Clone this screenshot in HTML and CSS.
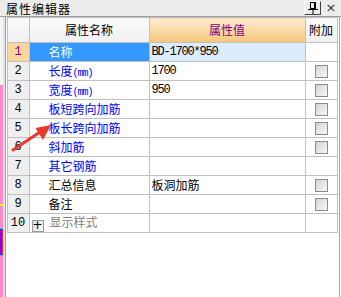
FILE: index.html
```html
<!DOCTYPE html>
<html lang="zh">
<head>
  <meta charset="UTF-8" />
  <title>属性编辑器</title>
  <link rel="stylesheet" href="styles.css">
</head>
<body>
  <div class="window">
    <div class="titlebar">
      <span class="title">属性编辑器</span>
      <div class="title-buttons">
        <span class="pin-btn">
          <svg width="12" height="12" viewBox="0 0 12 12">
            <rect x="3.5" y="0.5" width="5" height="6" fill="none" stroke="#000" />
            <line x1="7.5" y1="1" x2="7.5" y2="7" stroke="#000" />
            <line x1="1" y1="7.5" x2="11" y2="7.5" stroke="#000" />
            <line x1="6" y1="8" x2="6" y2="12" stroke="#000" />
          </svg>
        </span>
        <span class="close-btn">×</span>
      </div>
    </div>

    <div class="content">
      <div class="canvas-strip">
        <div class="strip-blank"></div>
        <div class="strip-pink tall"></div>
        <div class="strip-yellow"></div>
        <div class="strip-pink mid"></div>
        <div class="strip-cyan"></div>
        <div class="strip-purple"></div>
        <div class="strip-cyan"></div>
        <div class="strip-pink fill"></div>
      </div>
      <div class="edge"></div>

      <div class="panel">
        <table class="props">
          <colgroup>
            <col class="col-num">
            <col class="col-name">
            <col class="col-value">
            <col class="col-extra">
          </colgroup>
          <tr class="head">
            <th class="num"></th>
            <th>属性名称</th>
            <th class="head-value">属性值</th>
            <th>附加</th>
          </tr>
          <tr class="selected">
            <td class="num">1</td>
            <td class="name">名称</td>
            <td class="value mono">BD-1700*950</td>
            <td class="extra"></td>
          </tr>
          <tr>
            <td class="num">2</td>
            <td class="name link">长度<span class="unit">(mm)</span></td>
            <td class="value mono">1700</td>
            <td class="extra"><span class="check"></span></td>
          </tr>
          <tr>
            <td class="num">3</td>
            <td class="name link">宽度<span class="unit">(mm)</span></td>
            <td class="value mono">950</td>
            <td class="extra"><span class="check"></span></td>
          </tr>
          <tr>
            <td class="num">4</td>
            <td class="name link">板短跨向加筋</td>
            <td class="value"></td>
            <td class="extra"><span class="check"></span></td>
          </tr>
          <tr>
            <td class="num">5</td>
            <td class="name link">板长跨向加筋</td>
            <td class="value"></td>
            <td class="extra"><span class="check"></span></td>
          </tr>
          <tr>
            <td class="num">6</td>
            <td class="name link">斜加筋</td>
            <td class="value"></td>
            <td class="extra"><span class="check"></span></td>
          </tr>
          <tr>
            <td class="num">7</td>
            <td class="name link">其它钢筋</td>
            <td class="value"></td>
            <td class="extra"></td>
          </tr>
          <tr>
            <td class="num">8</td>
            <td class="name">汇总信息</td>
            <td class="value">板洞加筋</td>
            <td class="extra"><span class="check"></span></td>
          </tr>
          <tr>
            <td class="num">9</td>
            <td class="name">备注</td>
            <td class="value"></td>
            <td class="extra"><span class="check"></span></td>
          </tr>
          <tr>
            <td class="num">10</td>
            <td class="name group"><span class="expander">+</span>显示样式</td>
            <td class="value"></td>
            <td class="extra"></td>
          </tr>
        </table>
      </div>
      <div class="edge-right"></div>
    </div>

    <svg class="arrow" width="60" height="60" viewBox="0 0 60 60">
      <line x1="13" y1="50" x2="40" y2="32" stroke="#e8392b" stroke-width="3" stroke-linecap="round" />
      <polygon points="51,25 35.5,28 43,40" fill="#e8392b" />
    </svg>
  </div>
</body>
</html>
```

FILE: styles.css
```css
body {
  margin: 0;
  background: #ffffff;
  font-family: "Noto Sans CJK SC", "Liberation Sans", sans-serif;
  font-size: 12px;
  color: #000;
}

.window {
  position: relative;
  width: 341px;
  height: 297px;
  overflow: hidden;
}

/* title bar */
.titlebar {
  height: 16px;
  background: #ececec;
  border-bottom: 1px solid #a0a0a0;
  display: flex;
  align-items: flex-start;
  justify-content: space-between;
}

.title {
  display: block;
  padding: 2px 0 0 6px;
  font-size: 12px;
  line-height: 14px;
  letter-spacing: 1px;
}

.title-buttons {
  display: flex;
  align-items: center;
  height: 16px;
}

.pin-btn {
  display: flex;
  align-items: center;
  justify-content: center;
  width: 17px;
  height: 14px;
  box-sizing: border-box;
  border-right: 1px solid #404040;
  border-bottom: 1px solid #404040;
  border-top: 1px solid #fff;
  border-left: 1px solid #fff;
}

.close-btn {
  width: 20px;
  text-align: center;
  font-family: "DejaVu Sans", sans-serif;
  font-size: 13px;
  line-height: 16px;
  color: #333;
}

/* main area */
.content {
  display: flex;
  height: 280px;
}

.canvas-strip {
  width: 4px;
  display: flex;
  flex-direction: column;
}

.strip-blank { height: 68px; background: #f4f4f4; }
.strip-pink { background: #ff88c8; }
.strip-pink.tall { height: 119px; }
.strip-pink.mid { height: 22px; }
.strip-pink.fill { flex: 1; }
.strip-yellow { height: 2px; background: #ffff00; }
.strip-cyan { height: 1px; background: #00e0e0; }
.strip-purple {
  height: 26px;
  background: #8800ff;
  border-right: 1px solid #ff2020;
  box-sizing: border-box;
}

.edge {
  width: 2px;
  background: #e2e2e2;
  border-right: 1px solid #a0a0a0;
}

.panel {
  flex: 1;
  padding-left: 1px;
  background: #fff;
}

.edge-right {
  width: 2px;
  margin-left: 1px;
  background: #a8a8a8;
  margin-right: 1px;
}

/* property table */
.props {
  border-collapse: collapse;
  table-layout: fixed;
  width: 330px;
}

.col-num { width: 22px; }
.col-name { width: 120px; }
.col-value { width: 156px; }
.col-extra { width: 32px; }

.props th,
.props td {
  border: 1px solid #c0c0c0;
  padding: 0;
  white-space: nowrap;
  overflow: hidden;
}

.props tr {
  height: 19px;
}

.props tr.head {
  height: 25px;
}

.props th {
  font-weight: normal;
  font-size: 12px;
  line-height: 16px;
  background: linear-gradient(#fafafa, #f0f0f0);
  text-align: center;
}

.props th.head-value {
  background: linear-gradient(#fdecd2, #f6c779);
  color: #800080;
}

.props td {
  height: 17px;
  line-height: 16px;
}

.props td.num {
  background: #efefef;
  text-align: center;
  font-family: "Liberation Mono", monospace;
  font-size: 12px;
}

.props td.name {
  padding-left: 19px;
}

.props td.value {
  padding-left: 2px;
}

.mono {
  font-family: "Liberation Mono", monospace;
  letter-spacing: -1.2px;
}

.link {
  color: #0000ff;
}

.unit {
  font-family: "Liberation Mono", monospace;
  font-size: 10px;
  line-height: 10px;
  letter-spacing: -1px;
}

.selected td.num {
  background: #fcd59c;
  color: #800080;
}

.selected td.name {
  background: #3399ff;
  color: #fff;
}

.selected td.value {
  background: #ddecfd;
}

.props td.extra {
  text-align: center;
}

.check {
  display: inline-block;
  width: 13px;
  height: 13px;
  box-sizing: border-box;
  vertical-align: -2px;
  border: 1px solid #8c8c8c;
  background: linear-gradient(135deg, #d4d4d4, #f8f8f8);
}

.props td.group {
  padding-left: 2px;
  color: #808080;
}

.expander {
  display: inline-block;
  width: 12px;
  height: 12px;
  box-sizing: border-box;
  margin-right: 6px;
  border: 1px solid #9a9a9a;
  background: linear-gradient(135deg, #e0e0e0, #f8f8f8);
  color: #000;
  font-family: "DejaVu Sans", sans-serif;
  font-size: 12px;
  line-height: 9px;
  text-align: center;
  vertical-align: -2px;
}

/* annotation arrow */
.arrow {
  position: absolute;
  left: 0;
  top: 100px;
}
```
